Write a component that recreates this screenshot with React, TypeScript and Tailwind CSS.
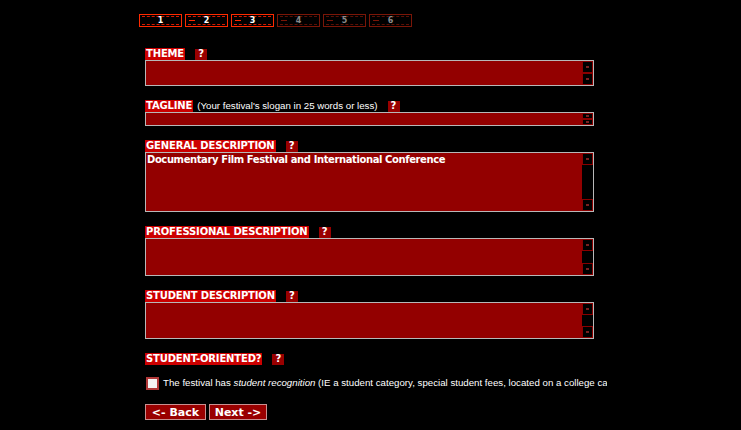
import React from 'react';

const verdana = { fontFamily: '"DejaVu Sans", Verdana, sans-serif' };
const arial = { fontFamily: '"Liberation Sans", Arial, sans-serif' };

const steps = [
  { n: '1', on: true, arrow: false },
  { n: '2', on: true, arrow: true },
  { n: '3', on: true, arrow: true },
  { n: '4', on: false, arrow: true },
  { n: '5', on: false, arrow: true },
  { n: '6', on: false, arrow: true },
];

function StepTab({ n, on, arrow }: { n: string; on: boolean; arrow: boolean }) {
  return (
    <div
      className={`relative w-[43px] h-[13px] border ${on ? 'border-[#ff2a00]' : 'border-[#7a1608]'} flex items-center justify-center`}
    >
      <div
        className={`absolute inset-x-[2px] top-[1px] bottom-[1px] border-y border-dashed ${on ? 'border-[#d81800]' : 'border-[#5a1006]'}`}
      />
      {arrow && (
        <div
          className={`absolute left-[3px] top-[5px] w-[6px] h-[1px] ${on ? 'bg-[#ff2a00]' : 'bg-[#7a1608]'}`}
        />
      )}
      <span
        className={`relative text-[8px] leading-none font-bold ${on ? 'text-white' : 'text-[#8a8a8a]'}`}
        style={verdana}
      >
        {n}
      </span>
    </div>
  );
}

function Help() {
  return (
    <span
      className="inline-flex items-center justify-center w-[12px] h-[11px] bg-[#990000] text-white text-[10px] font-bold leading-none ml-[10px]"
      style={verdana}
    >
      ?
    </span>
  );
}

function Label({ text, note }: { text: string; note?: string }) {
  return (
    <div className="flex items-center h-[12px]">
      <span
        className="bg-[#cc0000] text-white text-[10px] font-bold leading-[12px] px-[1px] tracking-[-0.15px]"
        style={verdana}
      >
        {text}
      </span>
      {note && (
        <span className="text-white text-[9.7px] ml-[4px] leading-[12px]" style={arial}>
          {note}
        </span>
      )}
      <Help />
    </div>
  );
}

function ScrollBtn({ h }: { h: number }) {
  return (
    <div
      className="w-[11px] bg-black border border-[#8a0000] flex items-center justify-center shrink-0"
      style={{ height: h }}
    >
      <div className="w-[3px] h-[2px] bg-[#7a2020]" />
    </div>
  );
}

function Field({ h, text }: { h: number; text?: string }) {
  const btn = Math.min(12, Math.floor((h - 2) / 2));
  return (
    <div
      className="w-[449px] border border-[#b8b8b8] bg-[#930000] flex"
      style={{ height: h }}
    >
      <div className="flex-1 px-[1px] pt-[1px] leading-[12px]">
        {text && (
          <span
            className="block text-white text-[10px] font-bold leading-[12px] tracking-[-0.4px]"
            style={verdana}
          >
            {text}
          </span>
        )}
      </div>
      <div className="w-[11px] bg-black flex flex-col justify-between">
        <ScrollBtn h={btn} />
        <ScrollBtn h={btn} />
      </div>
    </div>
  );
}

function Section({ label, note, h, text }: { label: string; note?: string; h: number; text?: string }) {
  return (
    <div className="mb-[14px]">
      <Label text={label} note={note} />
      <Field h={h} text={text} />
    </div>
  );
}

export default function App() {
  return (
    <div className="w-[741px] h-[430px] bg-black overflow-hidden">
      <div className="flex gap-[3px] pl-[139px] pt-[14px]">
        {steps.map((s) => (
          <StepTab key={s.n} {...s} />
        ))}
      </div>
      <div className="ml-[145px] mt-[21px] w-[462px] overflow-hidden">
        <Section label="THEME" h={26} />
        <Section label="TAGLINE" note="(Your festival's slogan in 25 words or less)" h={14} />
        <Section
          label="GENERAL DESCRIPTION"
          h={60}
          text="Documentary Film Festival and International Conference"
        />
        <Section label="PROFESSIONAL DESCRIPTION" h={38} />
        <Section label="STUDENT DESCRIPTION" h={37} />
        <Label text="STUDENT-ORIENTED?" />
        <div className="flex items-center mt-[12px] h-[13px] whitespace-nowrap overflow-hidden">
          <div className="w-[13px] h-[13px] border-2 border-[#b03838] bg-[#f4f4f4] shrink-0 ml-[1px]" />
          <span className="text-white text-[9.7px] ml-[4px]" style={arial}>
            The festival has <i>student recognition</i> (IE a student category, special student fees, located on a college ca
          </span>
        </div>
        <div className="flex gap-[3px] mt-[14px]">
          <button
            className="w-[61px] h-[16px] bg-[#990000] border border-[#c89090] text-white text-[11px] font-bold leading-none"
            style={verdana}
          >
            &lt;- Back
          </button>
          <button
            className="w-[58px] h-[16px] bg-[#990000] border border-[#c89090] text-white text-[11px] font-bold leading-none"
            style={verdana}
          >
            Next -&gt;
          </button>
        </div>
      </div>
    </div>
  );
}
